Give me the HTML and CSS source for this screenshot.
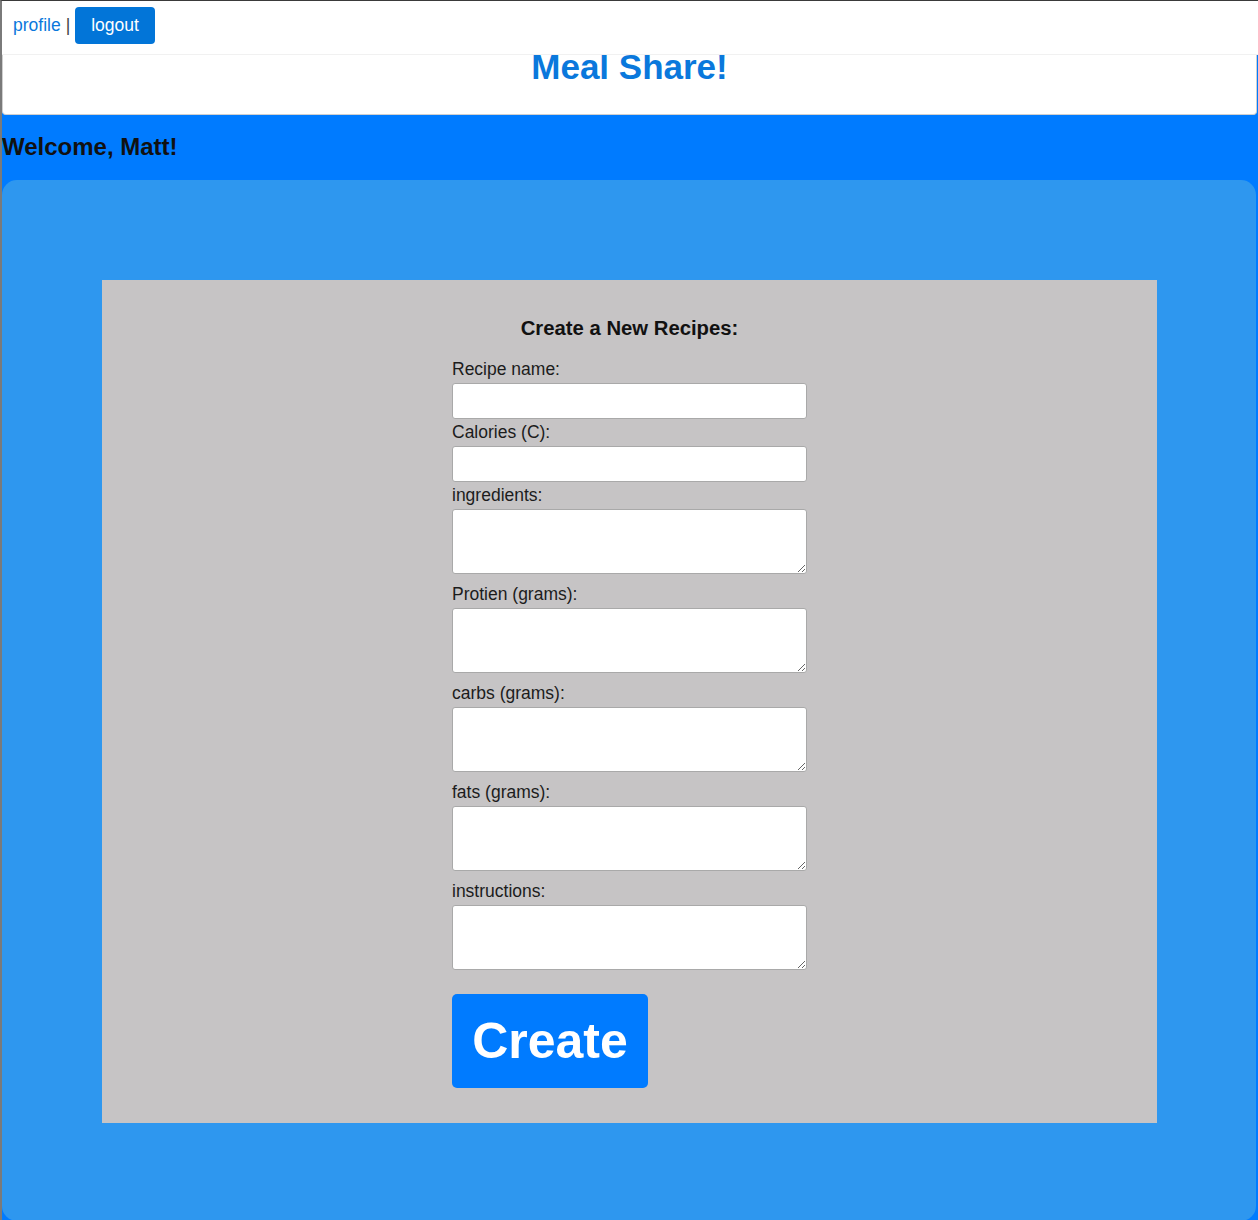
FILE: index.html
```html
<!DOCTYPE html>
<html>
<head>
<meta charset="utf-8">
<title>Meal Share</title>
<link rel="stylesheet" href="styles.css">
</head>
<body>
<div class="page">
  <nav class="topnav">
    <a class="nav-link" href="#">profile</a><span class="sep">|</span>
    <button class="logout">logout</button>
  </nav>
  <header class="site-header">
    <h1 class="title">Meal Share!</h1>
  </header>
  <main class="main">
    <h3 class="welcome">Welcome, Matt!</h3>
    <section class="panel">
      <div class="card">
        <form class="recipe-form">
          <h4 class="form-title">Create a New Recipes:</h4>
          <label class="lbl">Recipe name:</label>
          <input class="field" type="text">
          <label class="lbl">Calories (C):</label>
          <input class="field" type="text">
          <label class="lbl">ingredients:</label>
          <textarea class="area"></textarea>
          <label class="lbl">Protien (grams):</label>
          <textarea class="area"></textarea>
          <label class="lbl">carbs (grams):</label>
          <textarea class="area"></textarea>
          <label class="lbl">fats (grams):</label>
          <textarea class="area"></textarea>
          <label class="lbl">instructions:</label>
          <textarea class="area"></textarea>
          <button class="create" type="button">Create</button>
        </form>
      </div>
    </section>
  </main>
</div>
</body>
</html>
```

FILE: styles.css
```css
html, body {
  margin: 0;
  padding: 0;
  background: #ffffff;
}
body {
  font-family: "Liberation Sans", Arial, sans-serif;
  font-size: 17.5px;
  color: #212529;
}
.page {
  border-left: 2px solid #7a7a7a;
  border-top: 1px solid #3a3a3a;
  min-height: 1219px;
  background: #007bff;
}
.topnav {
  position: fixed;
  top: 1px;
  left: 2px;
  right: 0;
  height: 54px;
  background: #ffffff;
  border-bottom: 1px solid #f1f1f1;
  display: flex;
  align-items: flex-start;
  padding: 6px 0 0 11px;
  box-sizing: border-box;
  z-index: 10;
}
.nav-link {
  color: #0a78dc;
  text-decoration: none;
  line-height: 37px;
}
.sep {
  color: #444;
  line-height: 37px;
  margin: 0 5px 0 5px;
}
.logout {
  font-family: "Liberation Sans", Arial, sans-serif;
  font-size: 17.5px;
  color: #ffffff;
  background: #0275d8;
  border: none;
  border-radius: 4px;
  height: 37px;
  padding: 0 16px;
  line-height: 37px;
}
.site-header {
  background: #ffffff;
  height: 114px;
  margin-right: 1px;
  border: 1px solid #cfcfcf;
  border-top: none;
  border-radius: 0 0 4px 4px;
  box-sizing: border-box;
  display: flex;
  justify-content: center;
}
.title {
  margin: 46px 0 0 0;
  font-size: 35px;
  line-height: 40px;
  font-weight: bold;
  color: #0a78dc;
}
.main {
  padding-top: 0;
}
.welcome {
  margin: 0;
  padding: 18px 0 19px 0;
  font-size: 24px;
  line-height: 28px;
  font-weight: bold;
  color: #111;
}
.panel {
  background: #2e97ef;
  border-radius: 15px;
  margin-right: 2px;
  padding: 100px 99px 98px 100px;
}
.card {
  background: #c6c4c5;
  display: flex;
  justify-content: center;
  padding: 37px 0 35px 0;
}
.recipe-form {
  width: 355px;
  display: flex;
  flex-direction: column;
  align-items: stretch;
}
.form-title {
  margin: 0 0 16px 0;
  text-align: center;
  font-size: 20.3px;
  line-height: 23px;
  font-weight: bold;
  color: #111;
}
.lbl {
  display: block;
  line-height: 27px;
  height: 27px;
  color: #1c1c1c;
}
.field {
  display: block;
  box-sizing: border-box;
  height: 36px;
  margin: 0;
  border: 1px solid #a9a9a9;
  border-radius: 3px;
  background: #fff;
}
.area {
  display: block;
  box-sizing: border-box;
  height: 65px;
  margin: 0 0 7px 0;
  border: 1px solid #a9a9a9;
  border-radius: 3px;
  background: #fff;
  resize: vertical;
}
.create {
  align-self: flex-start;
  margin-top: 17px;
  width: 196px;
  height: 94px;
  background: #007bff;
  color: #ffffff;
  border: none;
  border-radius: 5px;
  font-family: "Liberation Sans", Arial, sans-serif;
  font-size: 50px;
  font-weight: bold;
  padding: 0;
}
```
